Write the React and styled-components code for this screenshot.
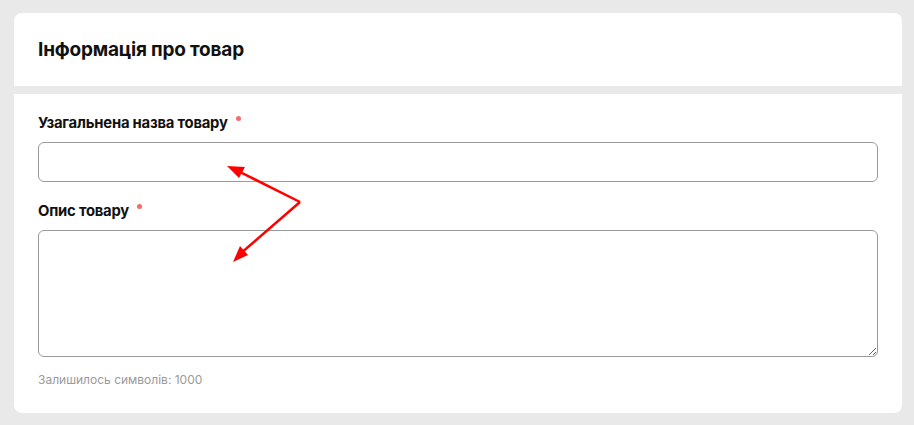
import styled, { createGlobalStyle } from "styled-components";

const GlobalStyle = createGlobalStyle`
  html, body {
    margin: 0;
    padding: 0;
    background: #e9e9e9;
    font-family: Inter, "Noto Sans", sans-serif;
  }
`;

const Page = styled.div`
  padding: 13px 12px 12px 14px;
  display: flex;
  flex-direction: column;
  gap: 8px;
  width: 888px;
`;

const Header = styled.div`
  background: #fff;
  border-radius: 8px 8px 0 0;
  height: 73px;
  padding: 0 24px;
  display: flex;
  align-items: center;
`;

const Title = styled.h2`
  margin: 0;
  font-size: 19px;
  font-weight: 700;
  color: #111;
  letter-spacing: -0.2px;
`;

const Body = styled.div`
  position: relative;
  background: #fff;
  border-radius: 0 0 8px 8px;
  padding: 21px 24px 26px;
  display: flex;
  flex-direction: column;
`;

const Field = styled.div`
  display: flex;
  flex-direction: column;
  gap: 10px;
  margin-bottom: ${(p) => p.$mb || 0}px;
`;

const Label = styled.label`
  font-size: 14.8px;
  line-height: 17px;
  font-weight: 700;
  color: #111;
  letter-spacing: -0.2px;
  display: flex;
  align-items: flex-start;
  gap: 8px;
`;

const Star = styled.span`
  width: 5px;
  height: 5px;
  border-radius: 50%;
  background: #f56a6a;
  margin-top: 1px;
`;

const Input = styled.input`
  box-sizing: border-box;
  height: 40px;
  border: 1px solid #9a9a9a;
  border-radius: 6px;
  outline: none;
  padding: 0 12px;
  font: inherit;
`;

const Textarea = styled.textarea`
  box-sizing: border-box;
  height: 127px;
  border: 1px solid #9a9a9a;
  border-radius: 6px;
  outline: none;
  padding: 10px 12px;
  font: inherit;
  resize: vertical;
`;

const Counter = styled.div`
  margin-top: 15px;
  font-size: 12px;
  color: #9a9a9a;
`;

const Arrows = styled.svg`
  position: absolute;
  left: 0;
  top: 0;
  pointer-events: none;
`;

export default function App() {
  return (
    <>
      <GlobalStyle />
      <Page>
        <Header>
          <Title>Інформація про товар</Title>
        </Header>
        <Body>
          <Field $mb={21}>
            <Label>
              Узагальнена назва товару <Star />
            </Label>
            <Input />
          </Field>
          <Field>
            <Label>
              Опис товару <Star />
            </Label>
            <Textarea />
          </Field>
          <Counter>Залишилось символів: 1000</Counter>
          <Arrows width="888" height="319" viewBox="0 0 888 319">
            <g stroke="#ff0000" strokeWidth="2.5" fill="none">
              <line x1="286" y1="108" x2="222" y2="76" />
              <line x1="286" y1="108" x2="226" y2="160" />
            </g>
            <polygon points="213,72 231,73 225,84" fill="#ff0000" />
            <polygon points="219,168 226,152 234,161" fill="#ff0000" />
          </Arrows>
        </Body>
      </Page>
    </>
  );
}
